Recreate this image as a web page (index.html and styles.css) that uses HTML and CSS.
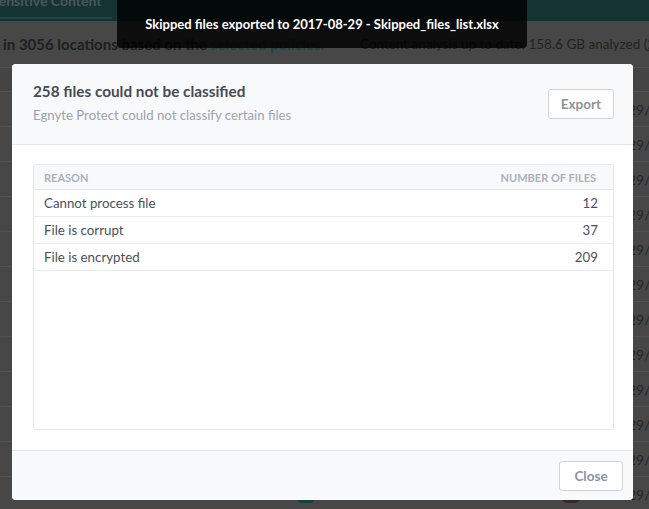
FILE: index.html
```html
<!DOCTYPE html>
<html lang="en">
<head>
<meta charset="utf-8">
<title>Skipped files</title>
<link rel="stylesheet" href="styles.css">
</head>
<body>
<div class="app">
  <div class="topbar"><div class="tab">Sensitive Content</div></div>
  <div class="summary">
    <div class="summary-left">in 3056 locations based on the <span class="link">selected policies.</span></div>
    <div class="summary-right">Content analysis up to date: 158.6 GB analyzed (<u>2,</u></div>
  </div>
  <div class="grid">
    <div class="grid-head"></div>
    <div class="grid-row"><span class="date">29/08/2017</span></div>
    <div class="grid-row"><span class="date">29/08/2017</span></div>
    <div class="grid-row"><span class="date">29/08/2017</span></div>
    <div class="grid-row"><span class="date">29/08/2017</span></div>
    <div class="grid-row"><span class="date">29/08/2017</span></div>
    <div class="grid-row"><span class="date">29/08/2017</span></div>
    <div class="grid-row"><span class="date">29/08/2017</span></div>
    <div class="grid-row"><span class="date">29/08/2017</span></div>
    <div class="grid-row"><span class="date">29/08/2017</span></div>
    <div class="grid-row"><span class="date">29/08/2017</span></div>
    <div class="grid-row"><span class="date">29/08/2017</span></div>
    <div class="grid-row"><span class="badge badge-teal"></span><span class="badge badge-red"></span><span class="date">29/08/2017</span></div>
  </div>
</div>

<div class="toast">Skipped files exported to 2017-08-29 - Skipped_files_list.xlsx</div>

<div class="modal">
  <div class="modal-header">
    <div class="modal-titles">
      <div class="modal-title">258 files could not be classified</div>
      <div class="modal-subtitle">Egnyte Protect could not classify certain files</div>
    </div>
    <button class="btn">Export</button>
  </div>
  <div class="modal-body">
    <div class="table">
      <div class="trow thead">
        <span>Reason</span>
        <span>Number of files</span>
      </div>
      <div class="trow">
        <span>Cannot process file</span>
        <span>12</span>
      </div>
      <div class="trow">
        <span>File is corrupt</span>
        <span>37</span>
      </div>
      <div class="trow">
        <span>File is encrypted</span>
        <span>209</span>
      </div>
    </div>
  </div>
  <div class="modal-footer">
    <button class="btn btn-close">Close</button>
  </div>
</div>
</body>
</html>
```

FILE: styles.css
```css
* { box-sizing: border-box; }

html, body {
  margin: 0;
  padding: 0;
  width: 649px;
  height: 509px;
  overflow: hidden;
}

body {
  font-family: "Lato", "Liberation Sans", sans-serif;
  background: #474747;
  color: #1f1f1f;
  position: relative;
}

/* ---------- dimmed background app ---------- */
.app {
  width: 649px;
}

.topbar {
  height: 21px;
  background: #163334;
  overflow: hidden;
}

.tab {
  margin-left: -9px;
  margin-top: -8px;
  width: 121px;
  font-weight: 700;
  font-size: 14px;
  line-height: 17px;
  color: #4c5757;
  height: 27px;
  border-bottom: 2px solid #1f4546;
}

.summary {
  height: 47px;
  display: flex;
  align-items: center;
  border-bottom: 1px solid #525252;
  white-space: nowrap;
  overflow: hidden;
}

.summary-left {
  flex-shrink: 0;
  padding-left: 3px;
  width: 360px;
  font-weight: 700;
  font-size: 15px;
  color: #1d1f21;
}

.link { color: #1b4445; }

.summary-right {
  flex-shrink: 0;
  font-size: 13.5px;
  color: #222;
}

.grid-head {
  height: 24px;
  background: #444;
  border-bottom: 1px solid #525252;
}

.grid-row {
  height: 35px;
  border-bottom: 1px solid #525252;
  display: flex;
  align-items: center;
  justify-content: flex-end;
  position: relative;
}

.date {
  width: 21px;
  overflow: hidden;
  white-space: nowrap;
  font-size: 14px;
  color: #262626;
}

.badge {
  position: absolute;
  top: 8px;
  width: 18px;
  height: 18px;
  border-radius: 5px;
}
.badge-teal { left: 297px; background: #163f3f; }
.badge-red { left: 562px; background: #3a2626; }

/* ---------- toast ---------- */
.toast {
  position: absolute;
  top: 0;
  left: 117px;
  width: 410px;
  height: 48px;
  background: rgba(0, 0, 0, 0.82);
  border-radius: 0 0 4px 4px;
  color: #fff;
  font-weight: 700;
  font-size: 13px;
  display: flex;
  align-items: center;
  justify-content: center;
}

/* ---------- modal ---------- */
.modal {
  position: absolute;
  top: 64px;
  left: 12px;
  width: 621px;
  height: 436px;
  background: #fff;
  border-radius: 4px;
  display: flex;
  flex-direction: column;
  overflow: hidden;
}

.modal-header {
  height: 81px;
  background: #f8f9fb;
  border-bottom: 1px solid #e3e7eb;
  display: flex;
  align-items: flex-start;
  justify-content: space-between;
  padding: 17px 19px 0 21px;
}

.modal-title {
  font-weight: 700;
  font-size: 15.3px;
  line-height: 20px;
  color: #454c55;
}

.modal-subtitle {
  font-size: 13.2px;
  line-height: 20px;
  margin-top: 4px;
  color: #9ca4ac;
}

.btn {
  font-family: inherit;
  font-weight: 700;
  font-size: 13.5px;
  color: #8b939b;
  background: #fff;
  border: 1px solid #cdd4db;
  border-radius: 3px;
  height: 30px;
  min-width: 66px;
  padding: 0 12px;
  margin-top: 8px;
}

.modal-body {
  flex: 1;
  padding: 19px 19px 20px 21px;
}

.table {
  height: 100%;
  border: 1px solid #e3e7eb;
  border-radius: 3px;
}

.trow {
  height: 27px;
  display: flex;
  align-items: center;
  justify-content: space-between;
  padding: 0 15px 0 10px;
  border-bottom: 1px solid #e9edf0;
  font-size: 13.3px;
  color: #4a5159;
}

.thead {
  height: 25px;
  background: #f8f9fb;
  border-bottom: 1px solid #e3e7eb;
  font-size: 11px;
  font-weight: 700;
  text-transform: uppercase;
  color: #abb2b9;
  padding-right: 17px;
}

.modal-footer {
  height: 50px;
  background: #f8f9fb;
  border-top: 1px solid #e3e7eb;
  display: flex;
  justify-content: flex-end;
  padding: 10px 10px 0 0;
}

.modal-footer .btn { margin-top: 0; }
.btn-close { min-width: 64px; }
```
